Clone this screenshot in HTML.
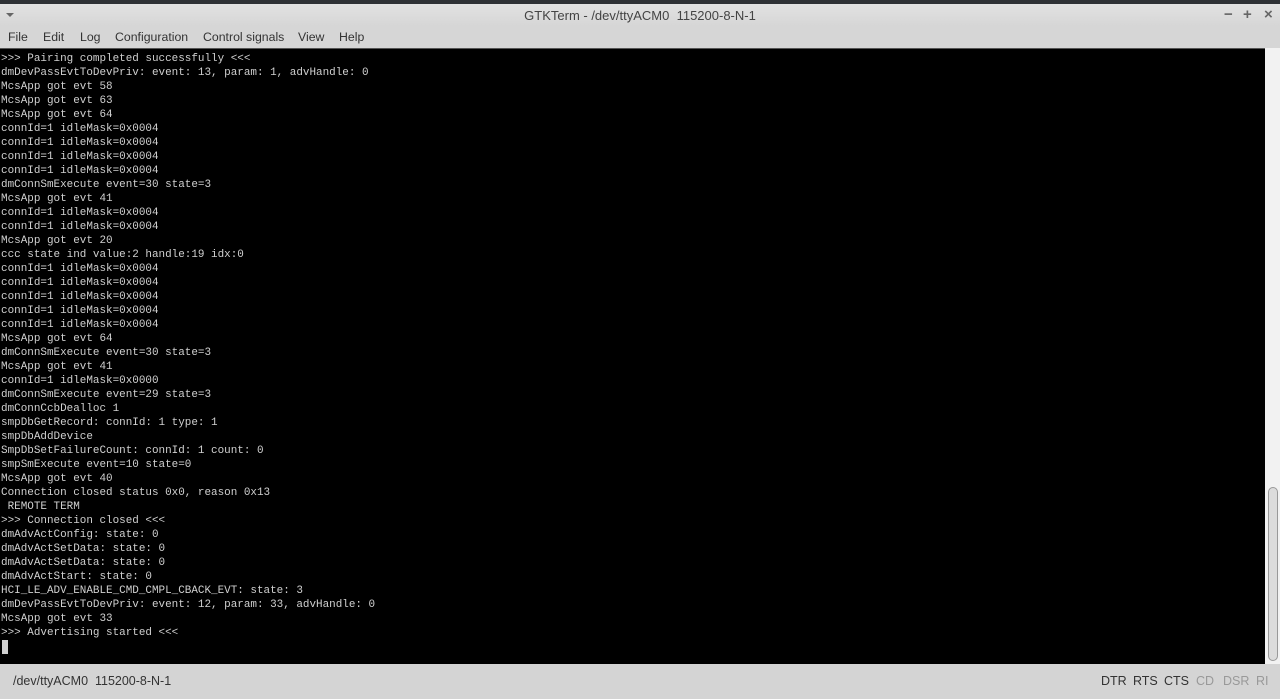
<!DOCTYPE html>
<html><head><meta charset="utf-8"><style>
html,body{margin:0;padding:0;width:1280px;height:699px;overflow:hidden;background:#d4d4d4;font-family:"Liberation Sans","DejaVu Sans",sans-serif;}
#top{position:absolute;left:0;top:0;width:1280px;height:4px;background:#2e3135;}
#title{position:absolute;left:0;top:4px;width:1280px;height:22px;background:linear-gradient(#e2e2e2,#d6d6d6);}
#title .t{position:absolute;left:0;width:1280px;top:4px;text-align:center;font-size:13px;color:#444;}
#title .c{position:absolute;top:2px;font-size:15px;color:#666;font-weight:bold;}
#title .arrow{position:absolute;left:6px;top:9px;width:0;height:0;border-left:4px solid transparent;border-right:4px solid transparent;border-top:4px solid #666;}
#menu{position:absolute;left:0;top:26px;width:1280px;height:22px;background:#d6d6d6;font-size:12.3px;color:#333;}
#menu span{position:absolute;top:4px;}
#term{position:absolute;left:0;top:48px;width:1265px;height:616px;background:#000;border-top:1px solid #555;}
#term pre{margin:0;position:absolute;left:1px;top:3px;font-family:"Liberation Mono","DejaVu Sans Mono",monospace;font-size:10.95px;line-height:14px;color:#d0d0d0;}
#cur{position:absolute;left:2px;top:640px;width:6px;height:14px;background:#d0d0d0;}
#sb{position:absolute;left:1265px;top:48px;width:15px;height:616px;background:#f2f2f2;}
#thumb{position:absolute;left:1268px;top:487px;width:8px;height:172px;background:#dcdcdc;border:1px solid #999;border-radius:5px;}
#status{position:absolute;left:0;top:664px;width:1280px;height:35px;background:#d4d4d4;font-size:12.5px;color:#333;}
#status span{position:absolute;top:10px;}
.dim{color:#999;}
</style></head><body>
<div id="top"></div>
<div id="title"><div class="arrow"></div><div class="t">GTKTerm - /dev/ttyACM0&nbsp; 115200-8-N-1</div>
<span class="c" style="left:1224px">−</span><span class="c" style="left:1243px">+</span><span class="c" style="left:1264px">×</span></div>
<div id="menu"><span style="left:8px">File</span><span style="left:43px">Edit</span><span style="left:80px">Log</span><span style="left:115px">Configuration</span><span style="left:203px">Control signals</span><span style="left:298px">View</span><span style="left:339px">Help</span></div>
<div id="term"><pre>&gt;&gt;&gt; Pairing completed successfully &lt;&lt;&lt;
dmDevPassEvtToDevPriv: event: 13, param: 1, advHandle: 0
McsApp got evt 58
McsApp got evt 63
McsApp got evt 64
connId=1 idleMask=0x0004
connId=1 idleMask=0x0004
connId=1 idleMask=0x0004
connId=1 idleMask=0x0004
dmConnSmExecute event=30 state=3
McsApp got evt 41
connId=1 idleMask=0x0004
connId=1 idleMask=0x0004
McsApp got evt 20
ccc state ind value:2 handle:19 idx:0
connId=1 idleMask=0x0004
connId=1 idleMask=0x0004
connId=1 idleMask=0x0004
connId=1 idleMask=0x0004
connId=1 idleMask=0x0004
McsApp got evt 64
dmConnSmExecute event=30 state=3
McsApp got evt 41
connId=1 idleMask=0x0000
dmConnSmExecute event=29 state=3
dmConnCcbDealloc 1
smpDbGetRecord: connId: 1 type: 1
smpDbAddDevice
SmpDbSetFailureCount: connId: 1 count: 0
smpSmExecute event=10 state=0
McsApp got evt 40
Connection closed status 0x0, reason 0x13
 REMOTE TERM
&gt;&gt;&gt; Connection closed &lt;&lt;&lt;
dmAdvActConfig: state: 0
dmAdvActSetData: state: 0
dmAdvActSetData: state: 0
dmAdvActStart: state: 0
HCI_LE_ADV_ENABLE_CMD_CMPL_CBACK_EVT: state: 3
dmDevPassEvtToDevPriv: event: 12, param: 33, advHandle: 0
McsApp got evt 33
&gt;&gt;&gt; Advertising started &lt;&lt;&lt;</pre></div>
<div id="cur"></div>
<div id="sb"></div><div id="thumb"></div>
<div id="status"><span style="left:13px">/dev/ttyACM0&nbsp; 115200-8-N-1</span>
<span style="left:1101px">DTR</span><span style="left:1133px">RTS</span><span style="left:1164px">CTS</span><span class="dim" style="left:1196px">CD</span><span class="dim" style="left:1223px">DSR</span><span class="dim" style="left:1256px">RI</span></div>
</body></html>
